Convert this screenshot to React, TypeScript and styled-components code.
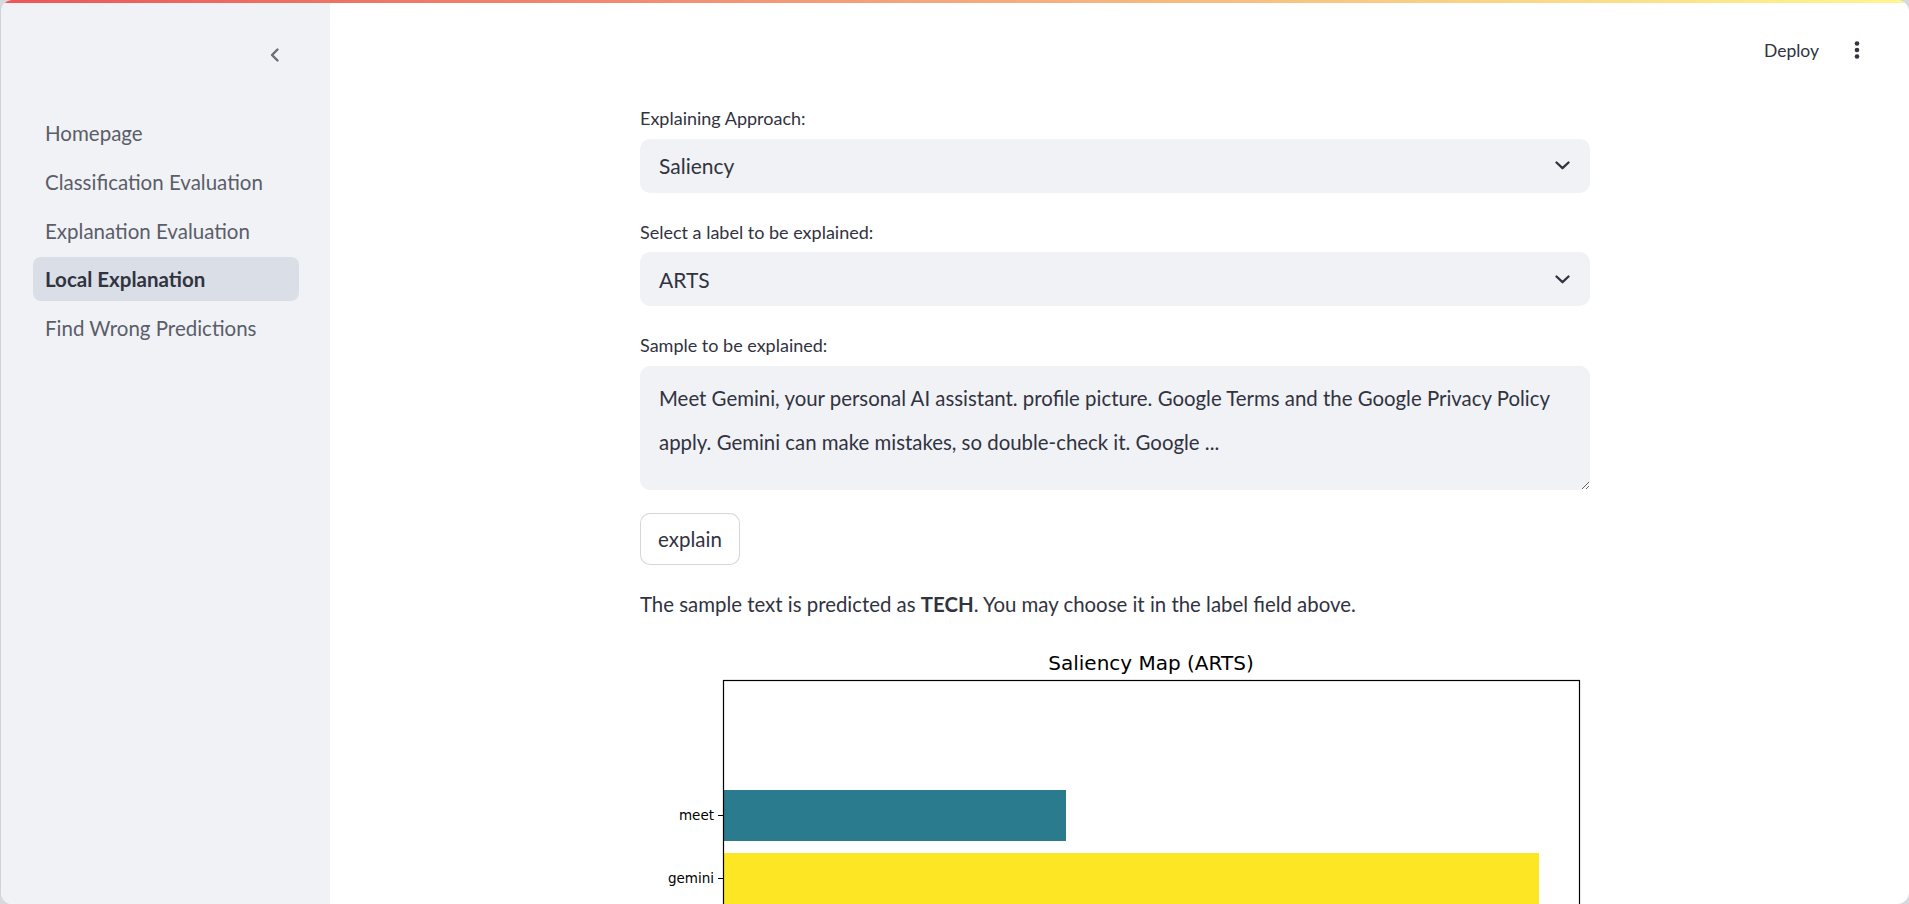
import React from "react";
import styled, { createGlobalStyle } from "styled-components";

const GlobalStyle = createGlobalStyle`
  html, body {
    margin: 0;
    padding: 0;
    background: #d8d9dc;
  }
  body {
    font-family: Lato, "Noto Sans", sans-serif;
    color: #31333f;
  }
  * { box-sizing: border-box; }
`;

const Frame = styled.div`
  position: relative;
  width: 1909px;
  height: 904px;
  border-radius: 12px;
  overflow: hidden;
  background: #ffffff;
  display: flex;
  border-left: 1px solid #d2d3d6;
`;

const Decoration = styled.div`
  position: absolute;
  top: 0;
  left: 0;
  right: 0;
  height: 3px;
  background: linear-gradient(90deg, #ec5658, #f3a07a 45%, #fff68f);
  z-index: 2;
`;

const Sidebar = styled.aside`
  width: 329px;
  flex-shrink: 0;
  background: #f0f2f6;
  display: flex;
  flex-direction: column;
  padding: 0 31px 0 32px;
`;

const SidebarTop = styled.div`
  height: 111px;
  display: flex;
  justify-content: flex-end;
  align-items: flex-start;
  padding: 39px 8px 0 0;
`;

const IconButton = styled.button`
  width: 32px;
  height: 32px;
  border: none;
  background: transparent;
  display: flex;
  align-items: center;
  justify-content: center;
  padding: 0;
  cursor: pointer;
`;

const NavList = styled.nav`
  display: flex;
  flex-direction: column;
  gap: 4.75px;
`;

const NavItem = styled.a<{ $active?: boolean }>`
  height: 44px;
  display: flex;
  align-items: center;
  padding: 0 12px;
  border-radius: 8px;
  font-size: 20.5px;
  text-decoration: none;
  white-space: nowrap;
  font-weight: ${(p) => (p.$active ? 700 : 400)};
  color: ${(p) => (p.$active ? "#31333f" : "#5b5d68")};
  background: ${(p) => (p.$active ? "#dadee7" : "transparent")};
`;

const Main = styled.main`
  flex: 1;
  min-width: 0;
  display: flex;
  flex-direction: column;
`;

const Header = styled.header`
  height: 100px;
  flex-shrink: 0;
  display: flex;
  align-items: center;
  justify-content: flex-end;
  gap: 26px;
  padding-right: 40px;
`;

const DeployButton = styled.span`
  font-size: 17.5px;
  color: #31333f;
`;

const Content = styled.div`
  width: 950px;
  margin-left: 310px;
  padding-top: 6px;
  display: flex;
  flex-direction: column;
`;

const Field = styled.div<{ $gap?: number }>`
  display: flex;
  flex-direction: column;
  margin-top: ${(p) => p.$gap ?? 0}px;
`;

const Label = styled.label`
  font-size: 18px;
  line-height: 24.5px;
  color: #31333f;
  margin-bottom: 8px;
`;

const Select = styled.div`
  height: 54px;
  background: #f0f2f6;
  border-radius: 10px;
  display: flex;
  align-items: center;
  justify-content: space-between;
  padding: 0 20px 0 19px;
  font-size: 21px;
  color: #31333f;
`;

const TextArea = styled.textarea`
  width: 100%;
  height: 124px;
  background: #f0f2f6;
  border: none;
  border-radius: 10px;
  padding: 10px 14px 10px 19px;
  font-family: Lato, "Noto Sans", sans-serif;
  font-size: 20.4px;
  line-height: 44px;
  color: #31333f;
  resize: vertical;
  outline: none;
  display: block;
  overflow: hidden;
`;

const Button = styled.button`
  margin-top: 23px;
  align-self: flex-start;
  height: 52px;
  width: 100px;
  background: #ffffff;
  border: 1px solid rgba(49, 51, 63, 0.2);
  border-radius: 10px;
  font-family: Lato, "Noto Sans", sans-serif;
  font-size: 20.5px;
  color: #31333f;
  padding: 0;
`;

const Paragraph = styled.p`
  margin: 23px 0 0;
  font-size: 20.4px;
  line-height: 32px;
  color: #31333f;
`;

const Chart = styled.svg`
  display: block;
  margin-top: 12px;
  font-family: "DejaVu Sans", sans-serif;
`;

const ChevronLeft = () => (
  <svg width="16" height="18" viewBox="0 0 16 18">
    <path d="M10.5 3.5 L5 9 L10.5 14.5" fill="none" stroke="#6b6d77" strokeWidth="2.4" strokeLinecap="round" strokeLinejoin="round" />
  </svg>
);

const ChevronDown = () => (
  <svg width="15" height="9" viewBox="0 0 15 9">
    <path d="M1.5 1.5 L7.5 7.2 L13.5 1.5" fill="none" stroke="#31333f" strokeWidth="2.3" strokeLinecap="round" strokeLinejoin="round" />
  </svg>
);

const Kebab = () => (
  <svg width="24" height="24" viewBox="0 0 24 24">
    <circle cx="12" cy="5.5" r="2.3" fill="#31333f" />
    <circle cx="12" cy="12" r="2.3" fill="#31333f" />
    <circle cx="12" cy="18.5" r="2.3" fill="#31333f" />
  </svg>
);

const navItems = [
  "Homepage",
  "Classification Evaluation",
  "Explanation Evaluation",
  "Local Explanation",
  "Find Wrong Predictions",
];

const bars = [
  { label: "meet", value: 342, color: "#2a7b8e", y: 158 },
  { label: "gemini", value: 815, color: "#fde725", y: 221 },
];

export default function App() {
  return (
    <>
      <GlobalStyle />
      <Frame>
        <Decoration />
        <Sidebar>
          <SidebarTop>
            <IconButton aria-label="Collapse sidebar">
              <ChevronLeft />
            </IconButton>
          </SidebarTop>
          <NavList>
            {navItems.map((item) => (
              <NavItem key={item} $active={item === "Local Explanation"}>
                {item}
              </NavItem>
            ))}
          </NavList>
        </Sidebar>
        <Main>
          <Header>
            <DeployButton>Deploy</DeployButton>
            <Kebab />
          </Header>
          <Content>
            <Field>
              <Label>Explaining Approach:</Label>
              <Select>
                <span>Saliency</span>
                <ChevronDown />
              </Select>
            </Field>
            <Field $gap={27}>
              <Label>Select a label to be explained:</Label>
              <Select>
                <span>ARTS</span>
                <ChevronDown />
              </Select>
            </Field>
            <Field $gap={27}>
              <Label>Sample to be explained:</Label>
              <TextArea
                readOnly
                value="Meet Gemini, your personal AI assistant. profile picture. Google Terms and the Google Privacy Policy apply. Gemini can make mistakes, so double-check it. Google ..."
              />
            </Field>
            <Button>explain</Button>
            <Paragraph>
              The sample text is predicted as <strong>TECH</strong>. You may choose it in the label field above.
            </Paragraph>
            <Chart width="950" height="290" viewBox="0 0 950 290">
              <text x="511" y="38" textAnchor="middle" fontSize="20" fill="#000">
                Saliency Map (ARTS)
              </text>
              {bars.map((b) => (
                <g key={b.label}>
                  <rect x="84" y={b.y} width={b.value} height="51" fill={b.color} />
                  <line x1="78" x2="83.5" y1={b.y + 25.5} y2={b.y + 25.5} stroke="#000" strokeWidth="1" />
                  <text x="74" y={b.y + 30} textAnchor="end" fontSize="13.5" fill="#000">
                    {b.label}
                  </text>
                </g>
              ))}
              <rect x="83.5" y="48.5" width="856" height="300" fill="none" stroke="#000" strokeWidth="1.2" />
            </Chart>
          </Content>
        </Main>
      </Frame>
    </>
  );
}
